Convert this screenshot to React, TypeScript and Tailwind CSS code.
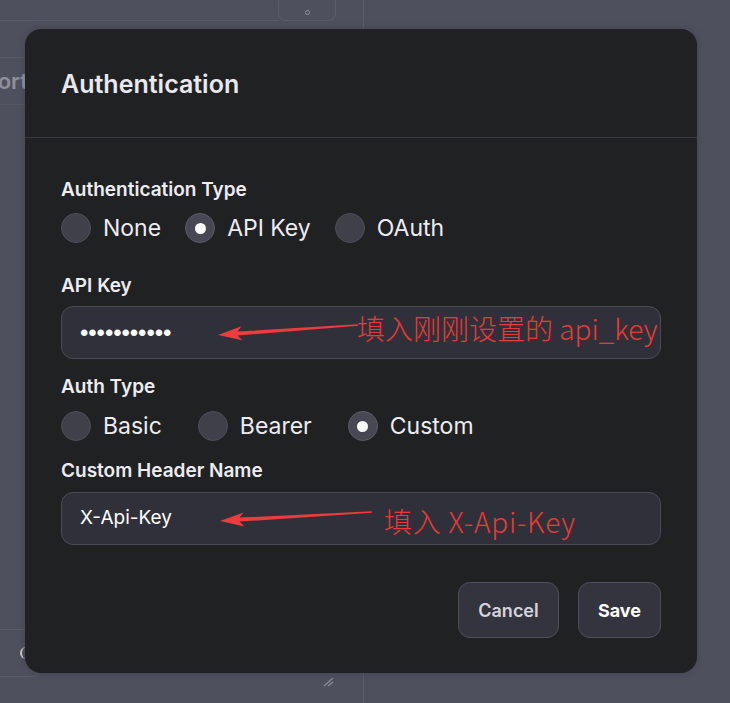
import React from 'react'

const ui = { fontFamily: 'Inter, "Noto Sans", sans-serif' }
const note = { fontFamily: '"Noto Sans CJK SC", "Noto Sans", sans-serif' }

function Radio({ label, checked }: { label: string; checked?: boolean }) {
  return (
    <div className="flex items-center gap-3">
      <div
        className={
          checked
            ? 'flex h-[30px] w-[30px] items-center justify-center rounded-full border border-[#5d5d6a] bg-[#484854]'
            : 'h-[30px] w-[30px] rounded-full border border-[#4e4e5a] bg-[#40404b]'
        }
      >
        {checked && <div className="h-[11px] w-[11px] rounded-full bg-white" />}
      </div>
      <span className="text-[23px] leading-[30px] text-[#ececf1]">{label}</span>
    </div>
  )
}

function Label({ children }: { children: React.ReactNode }) {
  return <div className="text-[19px] leading-[24px] font-semibold text-[#ececf1]">{children}</div>
}

export default function App() {
  return (
    <div className="relative h-[703px] w-[730px] overflow-hidden bg-[#4e505e]" style={ui}>
      {/* dimmed page behind the dialog */}
      <div className="flex h-full">
        <div className="flex w-[364px] flex-col border-r border-[#5a5c69]">
          <div className="flex h-[21px]">
            <div className="w-[278px] border-b border-[#5a5c69]" />
            <div className="flex w-[58px] items-end justify-center rounded-b-[8px] border-x border-b border-[#5a5c69] pb-[5px]">
              <div className="h-[5px] w-[5px] rounded-full border border-[#9092a0]" />
            </div>
          </div>
          <div className="mt-[36px] border-t border-[#575965]" />
          <div className="-ml-[42px] flex h-[46px] items-center text-[22px] font-semibold text-[#8e909c]">Import</div>
          <div className="border-t border-[#575965]" />
          <div className="flex-1" />
          <div className="mb-[26px] flex h-[48px] w-[40px] items-center rounded-r-[8px] border border-l-0 border-[#5a5c69] pl-[20px]">
            <div className="h-[12px] w-[8px] rounded-l-full border-l-2 border-[#c9cad2]" />
          </div>
        </div>
      </div>
      <svg className="absolute left-[322px] top-[676px]" width="14" height="12" viewBox="0 0 14 12">
        <path d="M2 10 L11 2 M6 10 L11 6" stroke="#8c8e9b" strokeWidth="1.2" />
      </svg>

      {/* dialog */}
      <div className="absolute left-[25px] top-[29px] flex w-[672px] flex-col rounded-[16px] bg-[#202123] shadow-[0_0_8px_rgba(0,0,0,0.15)]">
        <div className="flex h-[109px] items-center border-b border-[#37383d] px-9 pt-[4px]">
          <h2 className="text-[25px] font-semibold text-[#e8e8ee]">Authentication</h2>
        </div>
        <div className="flex flex-col px-9 pt-[40px] pb-[35px]">
          <Label>Authentication Type</Label>
          <div className="mt-[11px] flex gap-6">
            <Radio label="None" />
            <Radio label="API Key" checked />
            <Radio label="OAuth" />
          </div>

          <div className="mt-[31px]">
            <Label>API Key</Label>
          </div>
          <div className="mt-[8px] flex h-[53px] items-center rounded-[12px] border border-[#4b4b56] bg-[#30303a] px-[18px]">
            <span className="text-[24px] tracking-[-0.1px] text-white" style={{ fontFamily: '"Liberation Sans", sans-serif' }}>
              •••••••••••
            </span>
          </div>

          <div className="mt-[16px]">
            <Label>Auth Type</Label>
          </div>
          <div className="mt-[12px] flex gap-9">
            <Radio label="Basic" />
            <Radio label="Bearer" />
            <Radio label="Custom" checked />
          </div>

          <div className="mt-[18px]">
            <Label>Custom Header Name</Label>
          </div>
          <div className="mt-[9px] flex h-[53px] items-center rounded-[12px] border border-[#4b4b56] bg-[#30303a] px-[18px]">
            <span className="text-[19px] text-white">X-Api-Key</span>
          </div>

          <div className="mt-[37px] flex justify-end gap-[19px]">
            <button className="h-[56px] w-[101px] rounded-[12px] border border-[#50505b] bg-[#34343e] text-[18px] font-semibold text-[#d4d4dc]">
              Cancel
            </button>
            <button className="h-[56px] w-[83px] rounded-[12px] border border-[#50505b] bg-[#34343e] text-[18px] font-bold text-white">
              Save
            </button>
          </div>
        </div>
      </div>

      {/* red annotations drawn over the screenshot */}
      <svg className="pointer-events-none absolute left-0 top-0" width="730" height="703" viewBox="0 0 730 703">
        <polygon
          points="218,335 241.4,326.3 237.5,331.6 358,324.2 358,325.8 237.5,335.6 242.4,340.3"
          fill="#ee3b3b"
        />
        <polygon
          points="220,521 243.6,512.6 239.5,517.6 372,511.2 372,512.8 239.5,521.6 244.4,526.6"
          fill="#ee3b3b"
        />
      </svg>
      <div className="absolute left-[357px] top-[309px] text-[28px] leading-[38px] font-light text-[#ea3a36]" style={note}>
        填入刚刚设置的 api_key
      </div>
      <div className="absolute left-[384px] top-[502px] text-[28px] leading-[38px] font-light tracking-[0.8px] text-[#ea3a36]" style={note}>
        填入 X-Api-Key
      </div>
    </div>
  )
}
